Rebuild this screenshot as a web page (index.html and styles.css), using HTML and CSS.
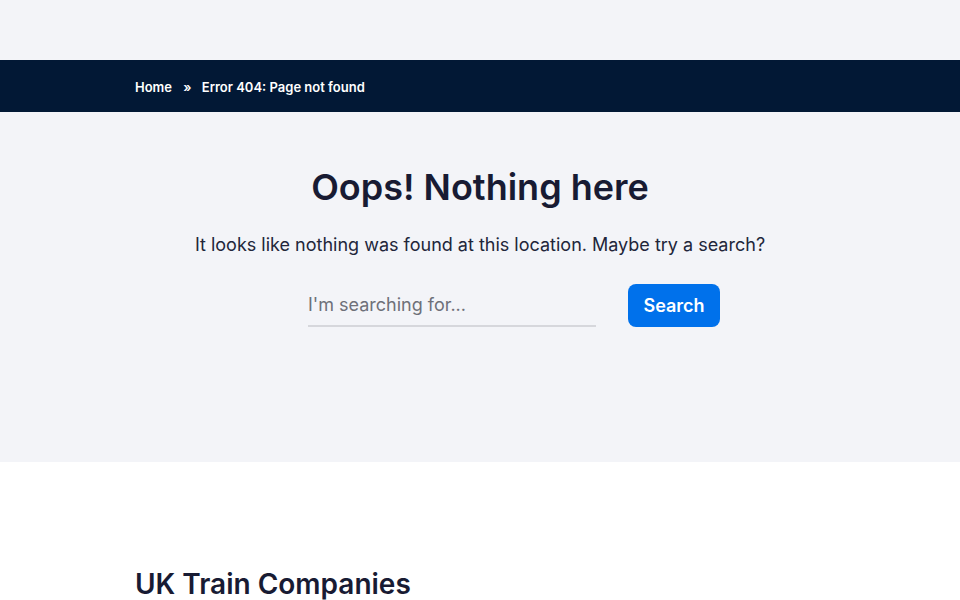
FILE: index.html
```html
<!DOCTYPE html>
<html lang="en">
<head>
    <meta charset="UTF-8">
    <meta name="viewport" content="width=device-width, initial-scale=1.0">
    <title>Error 404: Page not found</title>
    <link rel="stylesheet" href="styles.css">
</head>
<body>
    <div class="top-space"></div>
    <nav class="breadcrumb">
        <div class="container">
            <a href="#">Home</a>
            <span class="sep">&raquo;</span>
            <span>Error 404: Page not found</span>
        </div>
    </nav>
    <section class="not-found">
        <h1>Oops! Nothing here</h1>
        <p>It looks like nothing was found at this location. Maybe try a search?</p>
        <form class="search-form">
            <input type="text" placeholder="I'm searching for...">
            <button type="submit">Search</button>
        </form>
    </section>
    <section class="companies">
        <div class="container">
            <h2>UK Train Companies</h2>
        </div>
    </section>
</body>
</html>
```

FILE: styles.css
```css
body {
    margin: 0;
    font-family: Inter, "Noto Sans", sans-serif;
    color: #181b33;
    background: #fff;
}

.container {
    width: 690px;
    margin: 0 auto;
}

.top-space {
    height: 60px;
    background-color: #f3f4f8;
}

.breadcrumb {
    background-color: #021835;
    height: 52px;
    box-sizing: border-box;
    padding-top: 2px;
    display: flex;
    align-items: center;
    font-size: 13px;
    font-weight: 600;
    color: #fff;
}

.breadcrumb a {
    color: #fff;
    text-decoration: none;
}

.breadcrumb .sep {
    margin: 0 7px 0 8px;
}

.not-found {
    background-color: #f3f4f8;
    height: 350px;
    padding-top: 53px;
    box-sizing: border-box;
    text-align: center;
}

.not-found h1 {
    margin: 0;
    font-size: 36px;
    font-weight: 600;
    line-height: 44px;
}

.not-found p {
    margin: 23px 0 0;
    font-size: 18px;
    line-height: 26px;
    color: #22263a;
}

.search-form {
    display: flex;
    justify-content: center;
    align-items: center;
    gap: 32px;
    margin-top: 26px;
    margin-left: 68px;
}

.search-form input {
    width: 288px;
    height: 43px;
    box-sizing: border-box;
    border: none;
    border-bottom: 2px solid #d6d7dc;
    background: transparent;
    padding: 0;
    font-family: inherit;
    font-size: 18px;
    color: #181b33;
    outline: none;
}

.search-form input::placeholder {
    color: #6e7079;
}

.search-form button {
    width: 92px;
    height: 43px;
    border: none;
    border-radius: 8px;
    background-color: #0071eb;
    color: #fff;
    font-family: inherit;
    font-size: 18px;
    font-weight: 600;
}

.companies {
    padding-top: 104px;
}

.companies h2 {
    margin: 0;
    font-size: 28px;
    font-weight: 600;
    line-height: 36px;
}
```
